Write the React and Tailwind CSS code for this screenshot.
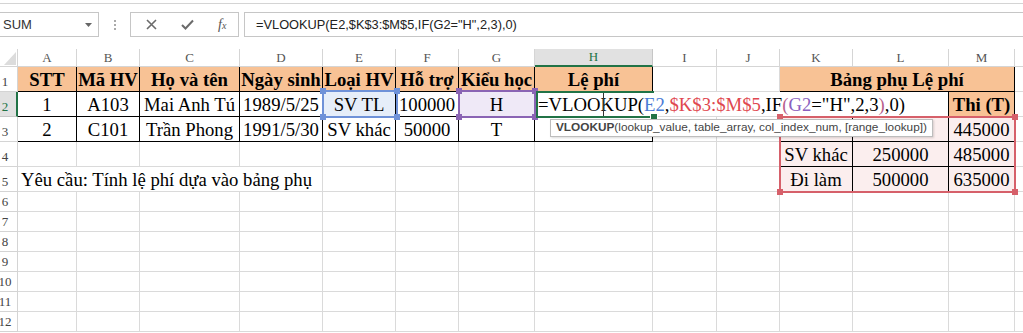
import React from "react"

const G = "border-r border-b border-[#dadada]"
const B = "border-r border-b border-black"
const GB = "border-r border-b border-r-black border-b-[#dadada]"
const ORANGE = "bg-[#f8c295] font-bold"
const PINK = "bg-[#fbeeee]"

function C({ children, className = "", left }) {
  return (
    <div
      className={
        "flex items-end whitespace-nowrap leading-[21px] text-[18.7px] text-black pb-[1px] " +
        (left ? "justify-start pl-[3px] " : "justify-center ") +
        className
      }
    >
      {children}
    </div>
  )
}

function RowHead({ n, active }) {
  return (
    <div
      className={
        "flex items-end overflow-hidden pb-[1px] text-[13px] leading-[16px] border-b " +
        (active
          ? "bg-[#e1e1e1] text-[#217346] border-r-2 border-r-[#217346] border-b-[#c6c6c6]"
          : "bg-white text-[#444] border-r border-[#d4d4d4]")
      }
    >
      <span className="w-[26px] shrink-0 ml-[-8px] text-center">{n}</span>
    </div>
  )
}

function ColHead({ l, active }) {
  return (
    <div
      className={
        "flex items-center justify-center text-[13px] " +
        (active
          ? "bg-[#e1e1e1] text-[#217346] border-r border-[#c6c6c6] border-b-2 border-b-[#217346]"
          : "bg-white text-[#555] border-r border-b border-[#d5d5d5]")
      }
    >
      {l}
    </div>
  )
}

function Handles({ color }) {
  return (
    <>
      <span className={"absolute -left-[4px] -top-[4px] w-[6px] h-[6px] " + color} />
      <span className={"absolute -right-[4px] -top-[4px] w-[6px] h-[6px] " + color} />
      <span className={"absolute -left-[4px] -bottom-[4px] w-[6px] h-[6px] " + color} />
      <span className={"absolute -right-[4px] -bottom-[4px] w-[6px] h-[6px] " + color} />
    </>
  )
}

export default function App() {
  const letters = ["A", "B", "C", "D", "E", "F", "G", "H", "I", "J", "K", "L", "M"]
  const empty = [6, 7, 8, 9, 10, 11, 12]

  return (
    <div className="w-[1023px] h-[333px] overflow-hidden bg-white font-['Liberation_Serif',serif]">
      {/* formula bar */}
      <div className="h-[49px] font-['Liberation_Sans',Arial,sans-serif]">
        <div className="h-[4px] border-b border-[#d4d4d4]" />
        <div className="flex h-[25px] mt-[8px]">
          <div className="w-[99px] border border-l-0 border-[#c6c6c6] flex items-center justify-between pl-[3px] pr-[6px] text-[13px] text-[#333]">
            <span>SUM</span>
            <svg width="7" height="4" viewBox="0 0 7 4">
              <polygon points="0,0 7,0 3.5,4" fill="#666" />
            </svg>
          </div>
          <div className="w-[31px] flex flex-col items-center justify-center gap-[2px]">
            <span className="w-[2px] h-[2px] bg-[#aaa]" />
            <span className="w-[2px] h-[2px] bg-[#aaa]" />
            <span className="w-[2px] h-[2px] bg-[#aaa]" />
          </div>
          <div className="w-[109px] border border-[#c6c6c6] flex items-center">
            <div className="w-[40px] flex justify-center pl-[2px]">
              <svg width="11" height="11" viewBox="0 0 11 11">
                <path d="M1 1 L10 10 M10 1 L1 10" stroke="#6b6b6b" strokeWidth="1.6" />
              </svg>
            </div>
            <div className="w-[30px] flex justify-center pl-[4px]">
              <svg width="13" height="11" viewBox="0 0 13 11">
                <path d="M1 6 L4.5 9.5 L12 1.5" stroke="#6b6b6b" strokeWidth="2" fill="none" />
              </svg>
            </div>
            <div className="w-[38px] flex justify-center pl-[6px] font-['Liberation_Serif',serif] italic text-[#555] text-[14px]">
              f<span className="text-[10px] mt-[4px]">x</span>
            </div>
          </div>
          <div className="flex-1 ml-[5px] border border-r-0 border-[#c6c6c6] flex items-center pl-[11px] text-[12.8px] text-[#222]">
            =VLOOKUP(E2,$K$3:$M$5,IF(G2="H",2,3),0)
          </div>
        </div>
      </div>

      {/* sheet */}
      <div className="relative grid grid-cols-[18px_59px_63px_100px_83px_73px_63px_76px_118px_64px_63px_73px_96px_66px_1fr] grid-rows-[18px_25px_25px_25px_25px_25px_20px_20px_20px_20px_20px_20px_20px] font-['Liberation_Serif',serif]">
        {/* column headers */}
        <div className="bg-white border-r border-b border-[#d5d5d5] flex items-end justify-end pr-[1px] pb-[1px]">
          <svg width="12" height="13" viewBox="0 0 12 13">
            <polygon points="12,0 12,13 0,13" fill="#dcdcdc" />
          </svg>
        </div>
        {letters.map((l) => (
          <ColHead key={l} l={l} active={l === "H"} />
        ))}
        <div className="bg-white border-b border-[#d5d5d5]" />

        {/* row 1 */}
        <RowHead n="1" />
        <C className={B + " " + ORANGE}>STT</C>
        <C className={B + " " + ORANGE}>Mã HV</C>
        <C className={B + " " + ORANGE}>Họ và tên</C>
        <C className={B + " " + ORANGE}>Ngày sinh</C>
        <C className={B + " " + ORANGE}>Loại HV</C>
        <C className={B + " " + ORANGE}>Hỗ trợ</C>
        <C className={B + " " + ORANGE}>Kiểu học</C>
        <C className={B + " " + ORANGE}>Lệ phí</C>
        <C className={G} />
        <C className={G} />
        <C className={B + " col-span-3 " + ORANGE}>Bảng phụ Lệ phí</C>
        <C className="border-b border-[#dadada]" />

        {/* row 2 */}
        <RowHead n="2" active />
        <C className={B}>1</C>
        <C className={B}>A103</C>
        <C className={B}>Mai Anh Tú</C>
        <C className={B}>1989/5/25</C>
        <C className={B + " bg-[#e6eef9]"}>SV TL</C>
        <C className={B}>100000</C>
        <C className={B + " bg-[#efe9f7]"}>H</C>
        <C left className={"col-span-5 bg-white border-r border-b border-r-black border-b-[#dadada]"}>
          <span>=VLOOKUP(</span>
          <span className="text-[#4a7bd6]">E2</span>
          <span>,</span>
          <span className="text-[#e0474f]">$K$3:$M$5</span>
          <span>,IF</span>
          <span className="text-[#b8608c]">(</span>
          <span className="text-[#8a5fc0]">G2</span>
          <span>="H",2,3</span>
          <span className="text-[#b8608c]">)</span>
          <span>,0)</span>
        </C>
        <C className={B + " " + ORANGE}>Thi (T)</C>
        <C className="border-b border-[#dadada]" />

        {/* row 3 */}
        <RowHead n="3" />
        <C className={B}>2</C>
        <C className={B}>C101</C>
        <C className={B}>Trần Phong</C>
        <C className={B}>1991/5/30</C>
        <C className={B}>SV khác</C>
        <C className={B}>50000</C>
        <C className={B}>T</C>
        <C className={B} />
        <C className={G} />
        <C className={GB} />
        <C className={B + " " + PINK} />
        <C className={B + " " + PINK} />
        <C className={B + " " + PINK}>445000</C>
        <C className="border-b border-[#dadada]" />

        {/* row 4 */}
        <RowHead n="4" />
        <C className={G} />
        <C className={G} />
        <C className={G} />
        <C className={G} />
        <C className={G} />
        <C className={G} />
        <C className={G} />
        <C className={G} />
        <C className={G} />
        <C className={GB} />
        <C className={B + " " + PINK}>SV khác</C>
        <C className={B + " " + PINK}>250000</C>
        <C className={B + " " + PINK}>485000</C>
        <C className="border-b border-[#dadada]" />

        {/* row 5 */}
        <RowHead n="5" />
        <C left className={G + " col-span-4"}>Yêu cầu: Tính lệ phí dựa vào bảng phụ</C>
        <C className={G} />
        <C className={G} />
        <C className={G} />
        <C className={G} />
        <C className={G} />
        <C className={GB} />
        <C className={B + " " + PINK}>Đi làm</C>
        <C className={B + " " + PINK}>500000</C>
        <C className={B + " " + PINK}>635000</C>
        <C className="border-b border-[#dadada]" />

        {/* rows 6-12 */}
        {empty.map((n) => (
          <React.Fragment key={n}>
            <RowHead n={n} />
            {letters.map((l) => (
              <div key={l} className={G} />
            ))}
            <div className="border-b border-[#dadada]" />
          </React.Fragment>
        ))}

        {/* range highlights */}
        <div className="absolute left-[322px] top-[41px] w-[76px] h-[28px] border-2 border-[#6f92d8] pointer-events-none">
          <Handles color="bg-[#6f92d8]" />
        </div>
        <div className="absolute left-[458px] top-[41px] w-[78px] h-[28px] border-2 border-[#8a64b4] pointer-events-none">
          <Handles color="bg-[#8a64b4]" />
        </div>
        <div className="absolute left-[536px] top-[42px] w-[118px] h-[27px] border-l-2 border-t-2 border-b-2 border-[#217346] pointer-events-none">
          <span className="absolute -right-[3px] -bottom-[4px] w-[6px] h-[6px] bg-[#217346] outline outline-1 outline-white" />
        </div>
        <div className="absolute left-[603px] top-[44px] w-[1px] h-[23px] bg-[#333]" />
        <div className="absolute left-[779px] top-[67px] w-[237px] h-[77px] border-2 border-[#d6606a] pointer-events-none">
          <Handles color="bg-[#d6606a]" />
        </div>

        {/* tooltip */}
        <div className="absolute left-[550px] top-[70px] h-[18px] px-[5px] flex items-center bg-white border border-[#bdbdbd] shadow-[1px_1px_2px_rgba(0,0,0,0.15)] font-['Liberation_Sans',Arial,sans-serif] text-[11.8px] text-[#444] whitespace-nowrap">
          <span className="font-bold">VLOOKUP</span>
          <span>(lookup_value, table_array, col_index_num, [range_lookup])</span>
        </div>
      </div>
    </div>
  )
}
